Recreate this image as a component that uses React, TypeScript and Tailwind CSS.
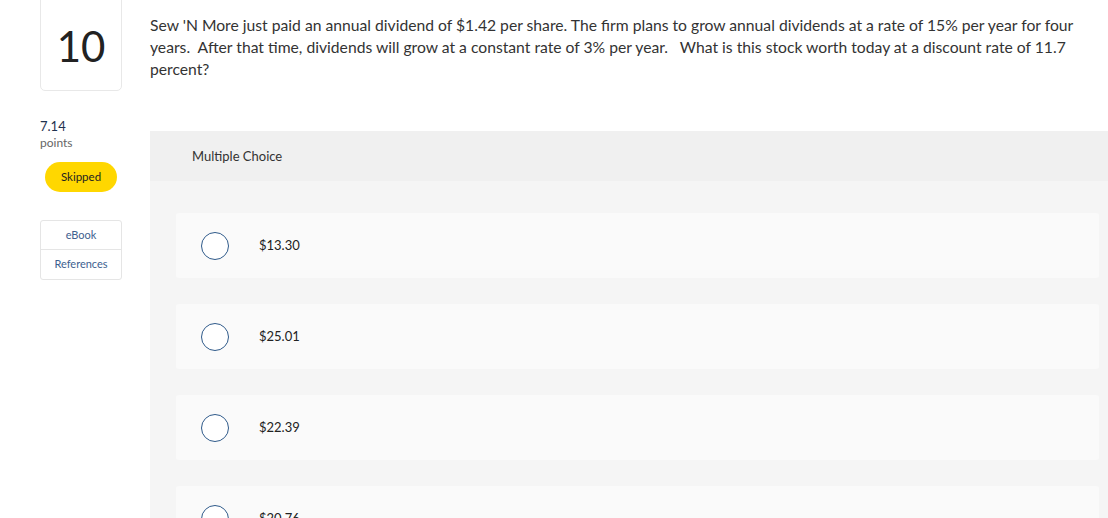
import React from "react";

const options = ["$13.30", "$25.01", "$22.39", "$20.76"];

export default function App() {
  return (
    <div
      className="w-[1108px] h-[518px] overflow-hidden bg-white text-[#333]"
      style={{ fontFamily: "Lato, 'Open Sans', Arial, sans-serif" }}
    >
      <div className="flex w-[1125px]">
        {/* left column */}
        <div className="w-[150px] shrink-0 pl-[40px] flex flex-col">
          <div className="w-[82px] h-[101px] mt-[-10px] border border-[#e8e8e8] rounded-[5px] flex items-center justify-center pt-[10px]">
            <span className="text-[42px] leading-none text-[#222] font-normal">10</span>
          </div>
          <div className="mt-[27px] text-[13px] leading-[16px] text-[#1f3350]">7.14</div>
          <div className="mt-[2px] text-[12px] leading-[14px] text-[#666]">points</div>
          <div className="mt-[12px] ml-[5px] w-[72px] h-[30px] rounded-full bg-[#ffd700] flex items-center justify-center text-[11.5px] text-[#222]">
            Skipped
          </div>
          <div className="mt-[28px] w-[82px] border border-[#e5e5e5] rounded-[3px] flex flex-col">
            <div className="h-[29px] flex items-center justify-center text-[11px] text-[#3e5f8f] border-b border-[#e5e5e5]">
              eBook
            </div>
            <div className="h-[29px] flex items-center justify-center text-[11px] text-[#3e5f8f]">
              References
            </div>
          </div>
        </div>

        {/* right column */}
        <div className="flex-1 flex flex-col">
          <p className="pt-[14px] pr-[30px] text-[15.7px] leading-[22px] text-[#333]">
            Sew 'N More just paid an annual dividend of $1.42 per share. The firm plans to grow annual dividends at a rate of 15% per year for four years.&nbsp; After that time, dividends will grow at a constant rate of 3% per year.&nbsp;&nbsp; What is this stock worth today at a discount rate of 11.7 percent?
          </p>
          <div className="mt-[51px] flex flex-col">
            <div className="h-[50px] bg-[#f0f0f0] flex items-center pl-[42px] pt-[2px] text-[13px] text-[#333]">
              Multiple Choice
            </div>
            <div className="bg-[#f5f5f5] px-[26px] pt-[32px] pb-[26px] flex flex-col gap-[26px]">
              {options.map((o) => (
                <div
                  key={o}
                  className="h-[65px] bg-[#fafafa] rounded-[3px] flex items-center pl-[25px]"
                >
                  <div className="w-[28px] h-[28px] rounded-full border-[1.5px] border-[#2f5a8a] bg-white shrink-0" />
                  <span className="ml-[30px] text-[13px] text-[#222]">{o}</span>
                </div>
              ))}
            </div>
          </div>
        </div>
      </div>
    </div>
  );
}
